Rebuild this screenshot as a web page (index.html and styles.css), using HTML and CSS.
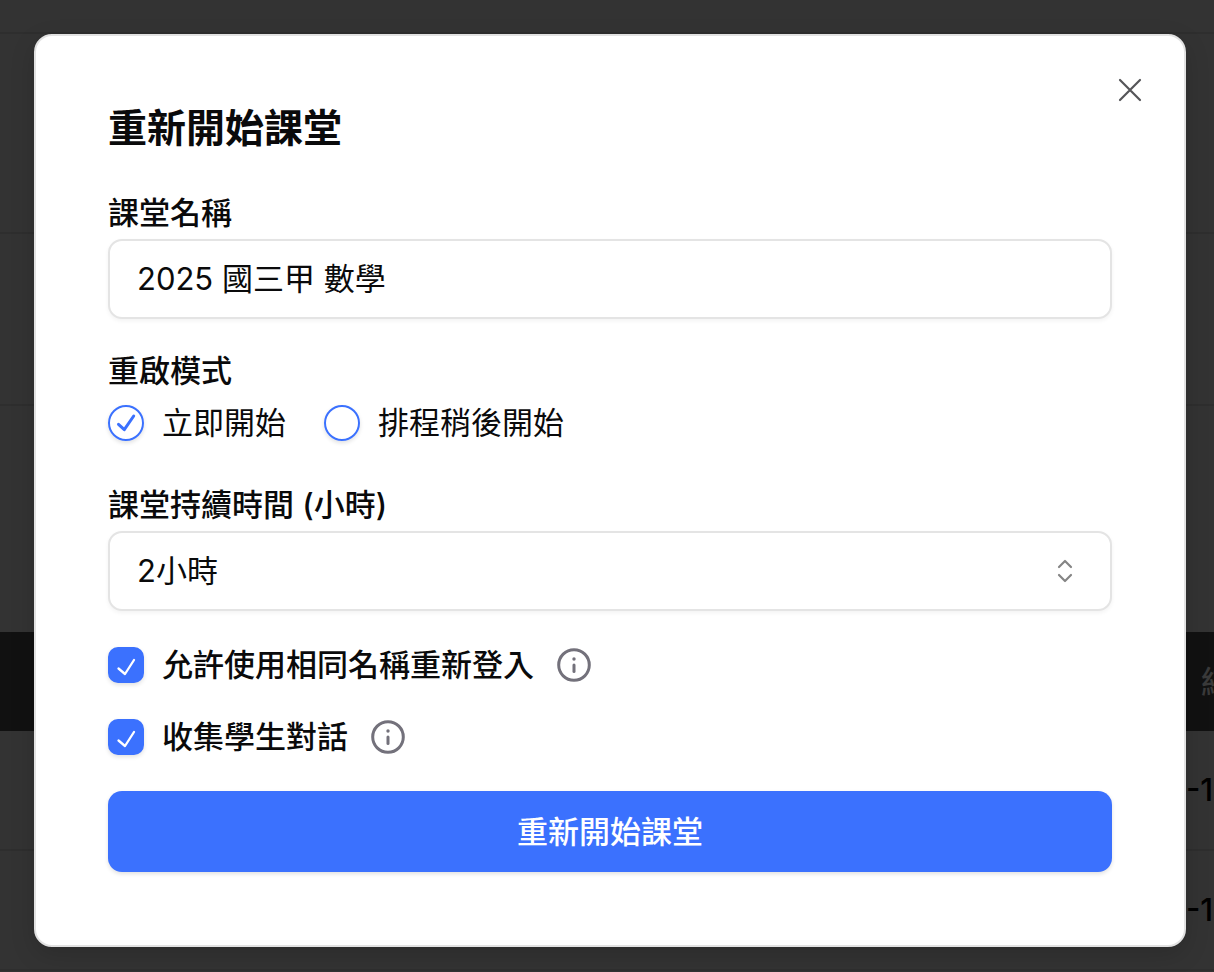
FILE: index.html
```html
<!DOCTYPE html>
<html lang="zh-Hant">
<head>
<meta charset="utf-8">
<meta name="viewport" content="width=device-width, initial-scale=1">
<title>重新開始課堂</title>
<link rel="stylesheet" href="styles.css">
</head>
<body>
<div class="page" aria-hidden="true">
  <div class="strip strip-top"></div>
  <div class="strip strip-header"></div>
  <div class="strip strip-tabs"></div>
  <div class="strip strip-tools"></div>
  <div class="row row-head"><span class="cell">結</span></div>
  <div class="row"><span class="cell cell-date">-1</span></div>
  <div class="row"><span class="cell cell-date">-1</span></div>
</div>
<main class="overlay">
  <section class="dialog" role="dialog" aria-modal="true" aria-labelledby="dialog-title">
    <button class="close" type="button" aria-label="關閉">
      <svg width="24" height="24" viewBox="0 0 24 24"><path d="M2 2 22 22M22 2 2 22"/></svg>
    </button>
    <h1 class="title" id="dialog-title">重新開始課堂</h1>
    <form class="form">
      <div class="field">
        <label class="label" for="name">課堂名稱</label>
        <input class="control text" id="name" type="text" value="2025 國三甲 數學">
      </div>
      <fieldset class="modes">
        <legend class="label">重啟模式</legend>
        <div class="options">
          <label class="option"><span class="tick round"><input type="radio" name="mode" checked><svg viewBox="0 0 36 36"><path d="M10.500 19.300 16.300 24.700 25.700 11"/></svg></span>立即開始</label>
          <label class="option"><span class="tick round"><input type="radio" name="mode"><svg viewBox="0 0 36 36"><path d="M10.500 19.300 16.300 24.700 25.700 11"/></svg></span>排程稍後開始</label>
        </div>
      </fieldset>
      <div class="field">
        <label class="label" for="duration">課堂持續時間 (小時)</label>
        <div class="select">
          <select class="control" id="duration"><option>2小時</option></select>
          <svg class="chevrons" width="16" height="24" viewBox="0 0 16 24"><path d="M2 8 8 2 14 8M2 16 8 22 14 16"/></svg>
        </div>
      </div>
      <div class="checks">
        <div class="check-row">
          <label class="option strong"><span class="tick square"><input type="checkbox" checked><svg viewBox="0 0 36 36"><path d="M10.500 21.500 17 27 26 13"/></svg></span>允許使用相同名稱重新登入</label>
          <button class="info" type="button" aria-label="說明"><svg width="34" height="34" viewBox="0 0 34 34"><circle class="ring" cx="17" cy="17" r="15.300"/><circle class="dot" cx="17" cy="11" r="1.700"/><path d="M17 17V23.500"/></svg></button>
        </div>
        <div class="check-row">
          <label class="option strong"><span class="tick square"><input type="checkbox" checked><svg viewBox="0 0 36 36"><path d="M10.500 21.500 17 27 26 13"/></svg></span>收集學生對話</label>
          <button class="info" type="button" aria-label="說明"><svg width="34" height="34" viewBox="0 0 34 34"><circle class="ring" cx="17" cy="17" r="15.300"/><circle class="dot" cx="17" cy="11" r="1.700"/><path d="M17 17V23.500"/></svg></button>
        </div>
      </div>
      <button class="submit" type="submit">重新開始課堂</button>
    </form>
  </section>
</main>
</body>
</html>
```
FILE: styles.css
```css
* { box-sizing: border-box; }

body {
  margin: 0;
  min-height: 100vh;
  background: #333;
  color: #0a0a0b;
  font: 400 31px/40px Inter, "Noto Sans CJK TC", sans-serif;
}

button, input, select { font: inherit; color: inherit; }

svg {
  fill: none;
  stroke: currentColor;
  stroke-width: 3;
  stroke-linecap: round;
  stroke-linejoin: round;
}

/* Dimmed page behind the dialog */
.page {
  position: absolute;
  inset: 0;
  overflow: hidden;
}
.strip { border-bottom: 2px solid #2e2e2e; }
.strip-top { height: 34px; }
.strip-header { height: 200px; }
.strip-tabs { height: 172px; }
.strip-tools { height: 226px; border: 0; }
.row {
  display: flex;
  justify-content: flex-end;
  align-items: center;
  height: 120px;
  border-bottom: 2px solid #2e2e2e;
  font-size: 31px;
  white-space: nowrap;
}
.row-head {
  height: 99px;
  background: #111;
  border: 0;
  color: #3a3a3a;
}
.cell { width: 13px; font-weight: 500; }
.cell-date { width: 28px; color: #000; }

.overlay {
  position: relative;
  padding: 34px 28px 26px 34px;
}
.dialog {
  position: relative;
  padding: 68px 72px 73px;
  background: #fff;
  border: 2px solid #e2e2e2;
  border-radius: 18px;
  box-shadow: 0 8px 24px rgba(0, 0, 0, .15);
}
.close {
  position: absolute;
  top: 42px;
  right: 42px;
  display: flex;
  padding: 0;
  background: none;
  border: 0;
  color: #555558;
}
.close svg { stroke-width: 2.2; }
.title {
  margin: 0 0 41px;
  font-size: 39px;
  line-height: 48px;
  font-weight: 700;
}

.form { display: flex; flex-direction: column; }
.field { display: flex; flex-direction: column; gap: 6px; }
.label { padding: 0; font-weight: 500; }
.control {
  width: 100%;
  height: 80px;
  padding: 0 27px;
  background: #fff;
  border: 2px solid #e4e4e4;
  border-radius: 14px;
  box-shadow: 0 2px 4px rgba(0, 0, 0, .05);
  appearance: none;
}
.text { padding-bottom: 6px; }
.select { position: relative; }
.chevrons {
  position: absolute;
  top: 28px;
  right: 39px;
  color: #858585;
  stroke-width: 2.2;
  pointer-events: none;
}
.modes {
  margin: 32px 0 42px;
  padding: 0;
  border: 0;
}
.options { display: flex; gap: 38px; margin-top: 12px; }
.option { display: flex; align-items: center; gap: 18px; }
.strong { font-weight: 500; }
.tick { display: grid; width: 36px; height: 36px; }
.tick > * { grid-area: 1 / 1; width: 36px; height: 36px; }
.tick input {
  margin: 0;
  appearance: none;
  border: 2px solid #3b71fe;
  box-shadow: 0 2px 4px rgba(0, 0, 0, .12);
}
.tick svg { position: relative; visibility: hidden; pointer-events: none; }
.tick input:checked + svg { visibility: visible; }
.round { color: #3b71fe; }
.round input { border-radius: 50%; }
.square { color: #fff; }
.square input { background: #3b71fe; border-radius: 10px; }
.square svg { stroke-width: 2.3; }
.checks {
  display: flex;
  flex-direction: column;
  gap: 32px;
  margin: 34px 0;
}
.check-row {
  display: flex;
  align-items: center;
  gap: 23px;
}
.info {
  display: flex;
  padding: 0;
  background: none;
  border: 0;
  color: #73717b;
}
.info .dot { fill: currentColor; stroke: none; }
.submit {
  height: 81px;
  background: #3b71fe;
  border: 0;
  border-radius: 14px;
  box-shadow: 0 2px 4px rgba(0, 0, 0, .12);
  color: #fff;
  font-weight: 500;
}
```
